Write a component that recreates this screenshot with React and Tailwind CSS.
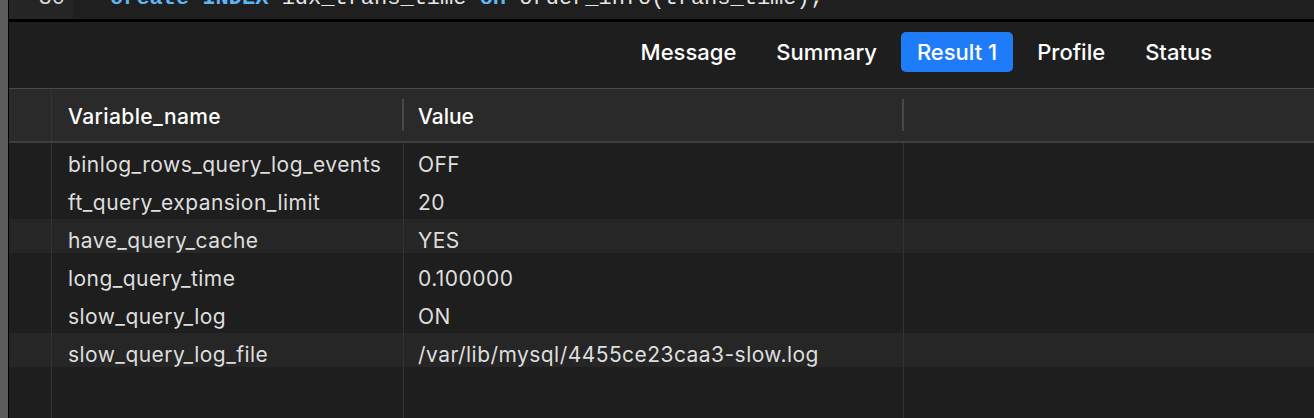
import React from "react";

const rows = [
  ["binlog_rows_query_log_events", "OFF", false],
  ["ft_query_expansion_limit", "20", false],
  ["have_query_cache", "YES", true],
  ["long_query_time", "0.100000", false],
  ["slow_query_log", "ON", false],
  ["slow_query_log_file", "/var/lib/mysql/4455ce23caa3-slow.log", true],
];

const tabs = ["Message", "Summary", "Result 1", "Profile", "Status"];

export default function App() {
  const sans = { fontFamily: "Inter, 'Noto Sans', 'Liberation Sans', sans-serif" };
  return (
    <div
      className="w-[1314px] h-[418px] flex bg-[#1e1e1e] overflow-hidden"
      style={sans}
    >
      <div className="w-[8px] shrink-0 bg-[#5c5c5c]" />
      <div className="w-px shrink-0 bg-black" />
      <div className="flex-1 flex flex-col min-w-0">
        {/* editor strip */}
        <div className="h-[19px] shrink-0 flex overflow-hidden">
          <div className="w-[64px] shrink-0 bg-[#252525] flex justify-end pr-[8px]">
            <div
              className="mt-[-12px] h-[22px] leading-[22px] text-[22px] text-[#d8d8d8]"
              style={{ fontFamily: "'Liberation Mono', monospace" }}
            >
              30
            </div>
          </div>
          <div className="flex-1 bg-[#1f1f1f] pl-[37px]">
            <div
              className="mt-[-12px] h-[22px] leading-[22px] text-[22px] whitespace-pre text-[#e6e6e6]"
              style={{ fontFamily: "'Liberation Mono', monospace" }}
            >
              <span className="text-[#5cb8f5] font-bold">create INDEX</span>
              {" idx_trans_time "}
              <span className="text-[#5cb8f5] font-bold">on</span>
              {" order_info(trans_time);"}
            </div>
          </div>
        </div>
        <div className="h-[3px] shrink-0 bg-black" />
        {/* tab bar */}
        <div className="h-[66px] shrink-0 flex justify-end items-start pt-[10px] pr-[86px] gap-[8px]">
          {tabs.map((t) => (
            <div
              key={t}
              className={
                "h-[40px] px-[16px] flex items-center rounded-[5px] text-[22px] font-medium text-white " +
                (t === "Result 1" ? "bg-[#1f7cf8]" : "")
              }
            >
              {t}
            </div>
          ))}
        </div>
        <div className="h-px shrink-0 bg-[#4a4a4a]" />
        {/* header */}
        <div className="h-[52px] shrink-0 flex bg-[#2a2a2a] text-[21px] font-medium text-white">
          <div className="w-[43px] shrink-0 border-r border-[#333333]" />
          <div className="w-[352px] shrink-0 flex items-center justify-between pl-[16px]">
            <span className="tracking-[0.4px] pt-[3px]">Variable_name</span>
            <div className="w-[2px] h-[32px] bg-[#474747]" />
          </div>
          <div className="w-[500px] shrink-0 flex items-center justify-between pl-[14px]">
            <span className="pt-[3px]">Value</span>
            <div className="w-[2px] h-[32px] bg-[#474747]" />
          </div>
          <div className="flex-1" />
        </div>
        <div className="h-[2px] shrink-0 bg-[#3e3e3e]" />
        {/* body */}
        <div className="flex-1 flex flex-col text-[21px] tracking-[0.45px] text-[#dedede]">
          {rows.map(([n, v, s]) => (
            <div key={n} className="h-[38px] shrink-0 flex">
              <div className="w-[43px] shrink-0 border-r border-[#333333] flex flex-col">
                <div className={"h-[34px] " + (s ? "bg-[#262626]" : "")} />
              </div>
              <div className="w-[352px] shrink-0 border-r border-[#333333] flex flex-col">
                <div className={"h-[34px] flex items-center pt-[10px] pl-[16px] whitespace-nowrap " + (s ? "bg-[#262626]" : "")}>
                  {n}
                </div>
              </div>
              <div className="w-[500px] shrink-0 border-r border-[#333333] flex flex-col">
                <div className={"h-[34px] flex items-center pt-[10px] pl-[14px] whitespace-nowrap " + (s ? "bg-[#262626]" : "")}>
                  {v}
                </div>
              </div>
              <div className="flex-1 flex flex-col">
                <div className={"h-[34px] " + (s ? "bg-[#262626]" : "")} />
              </div>
            </div>
          ))}
          <div className="flex-1 flex">
            <div className="w-[43px] shrink-0 border-r border-[#333333]" />
            <div className="w-[352px] shrink-0 border-r border-[#333333]" />
            <div className="w-[500px] shrink-0 border-r border-[#333333]" />
            <div className="flex-1" />
          </div>
        </div>
      </div>
    </div>
  );
}
